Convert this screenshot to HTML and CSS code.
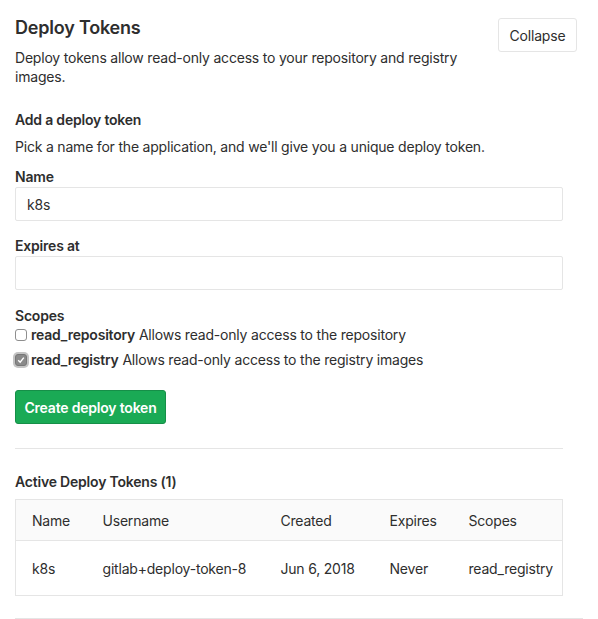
FILE: index.html
```html
<!DOCTYPE html>
<html>
<head>
<meta charset="utf-8">
<link rel="stylesheet" href="styles.css">
</head>
<body>
<section class="settings">
  <div class="settings-header">
    <div class="header-text">
      <h4 class="title">Deploy Tokens</h4>
      <p class="desc">Deploy tokens allow read-only access to your repository and registry images.</p>
    </div>
    <button class="btn btn-default">Collapse</button>
  </div>
  <div class="content">
    <h5 class="subtitle">Add a deploy token</h5>
    <p class="hint">Pick a name for the application, and we'll give you a unique deploy token.</p>
    <div class="form-group">
      <label class="label">Name</label>
      <input class="form-control" type="text" value="k8s">
    </div>
    <div class="form-group">
      <label class="label">Expires at</label>
      <input class="form-control" type="text" value="">
    </div>
    <div class="form-group scopes">
      <label class="label">Scopes</label>
      <div class="check-row">
        <span class="box"></span>
        <span><b>read_repository</b> Allows read-only access to the repository</span>
      </div>
      <div class="check-row">
        <span class="box checked"><svg width="8" height="8" viewBox="0 0 8 8"><path d="M1.2 4.2 L3.2 6.2 L6.8 1.6" fill="none" stroke="#fff" stroke-width="1.4"/></svg></span>
        <span><b>read_registry</b> Allows read-only access to the registry images</span>
      </div>
    </div>
    <button class="btn btn-success">Create deploy token</button>
    <hr class="divider">
    <h5 class="subtitle active">Active Deploy Tokens (1)</h5>
    <table class="tokens">
      <thead>
        <tr><th class="c1">Name</th><th class="c2">Username</th><th class="c3">Created</th><th class="c4">Expires</th><th class="c5">Scopes</th></tr>
      </thead>
      <tbody>
        <tr><td>k8s</td><td>gitlab+deploy-token-8</td><td>Jun 6, 2018</td><td>Never</td><td>read_registry</td></tr>
      </tbody>
    </table>
  </div>
</section>
</body>
</html>
```
FILE: styles.css
```css
* { box-sizing: border-box; }
body {
  margin: 0;
  font-family: Inter, "Liberation Sans", Arial, sans-serif;
  font-size: 14px;
  letter-spacing: -0.2px;
  color: #2e2e2e;
  background: #fff;
}
b { font-weight: 600; }
.settings {
  margin: 0 15px;
  width: 568px;
  padding-top: 16px;
  padding-bottom: 22px;
  border-bottom: 1px solid #e5e5e5;
}
.settings-header {
  display: flex;
  justify-content: space-between;
  align-items: flex-start;
  padding-right: 6px;
}
.header-text { width: 470px; }
.title {
  margin: 0;
  font-size: 18px;
  line-height: 24px;
  font-weight: 600;
}
.desc {
  margin: 8px 0 0;
  line-height: 19px;
}
.btn {
  font-family: inherit;
  font-size: 14px;
  letter-spacing: -0.2px;
  border-radius: 3px;
  height: 34px;
  padding: 0 12px;
  cursor: pointer;
}
.btn-default {
  margin-top: 2px;
  width: 79px;
  background: #fff;
  border: 1px solid #e5e5e5;
  color: #2e2e2e;
  padding: 0;
}
.content { width: 548px; padding-top: 25px; }
.subtitle {
  margin: 0;
  font-size: 14px;
  font-weight: 600;
  line-height: 18px;
}
.hint { margin: 9px 0 0; line-height: 18px; }
.form-group { margin-top: 16px; }
.hint + .form-group { margin-top: 12px; }
.label {
  display: block;
  font-weight: 600;
  line-height: 18px;
  margin-bottom: 1px;
}
.form-control {
  display: block;
  width: 100%;
  height: 34px;
  border: 1px solid #e5e5e5;
  border-radius: 2px;
  padding: 0 11px;
  font-family: inherit;
  font-size: 14px;
  letter-spacing: -0.2px;
  color: #2e2e2e;
  outline: none;
}
.scopes { margin-top: 17px; }
.scopes .label { margin-bottom: 0; }
.check-row {
  display: flex;
  align-items: center;
  gap: 4px;
  height: 25px;
}
.scopes .label + .check-row { margin-top: -3px; }
.box {
  width: 12px;
  height: 12px;
  border: 1px solid #8e8e8e;
  border-radius: 3px;
  background: #fff;
  display: flex;
  align-items: center;
  justify-content: center;
  flex: none;
}
.box.checked {
  background: #8a8a8a;
  border-color: #777;
  box-shadow: 0 0 0 2px #c4c4c4;
}
.btn-success {
  margin-top: 18px;
  width: 151px;
  background: #1aaa55;
  border: 1px solid #168f48;
  color: #fff;
  font-weight: 600;
  padding: 0;
}
.divider {
  margin: 24px 0 0;
  border: 0;
  border-top: 1px solid #e5e5e5;
}
.subtitle.active { margin-top: 24px; }
.tokens {
  margin-top: 8px;
  width: 100%;
  border-collapse: collapse;
  border: 1px solid #e5e5e5;
}
.tokens th {
  text-align: left;
  font-weight: 400;
  background: #fafafa;
  height: 41px;
  border-bottom: 1px solid #e5e5e5;
  padding: 0;
}
.tokens td {
  height: 55px;
  padding: 0;
}
.tokens th:first-child, .tokens td:first-child { padding-left: 16px; }
.c1 { width: 87px; }
.c2 { width: 178px; }
.c3 { width: 109px; }
.c4 { width: 79px; }
```
